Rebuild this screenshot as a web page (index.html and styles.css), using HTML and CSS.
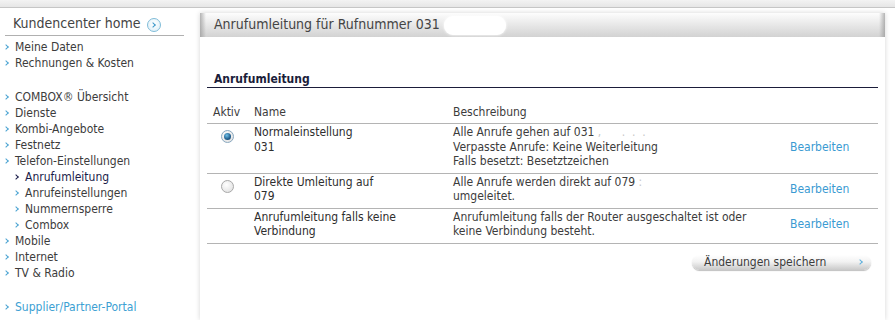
FILE: index.html
```html
<!DOCTYPE html>
<html lang="de">
<head>
  <meta charset="UTF-8">
  <meta name="viewport" content="width=device-width, initial-scale=1.0">
  <title>Anrufumleitung</title>
  <link rel="stylesheet" href="styles.css">
</head>
<body>
  <div class="topbar"></div>

  <div class="page">
    <!-- Navigation -->
    <aside class="sidebar">
      <div class="home">Kundencenter home <span class="home-icon"></span></div>
      <ul class="nav">
        <li><a href="#">Meine Daten</a></li>
        <li><a href="#">Rechnungen &amp; Kosten</a></li>
        <li class="spacer"></li>
        <li><a href="#">COMBOX® Übersicht</a></li>
        <li><a href="#">Dienste</a></li>
        <li><a href="#">Kombi-Angebote</a></li>
        <li><a href="#">Festnetz</a></li>
        <li><a href="#">Telefon-Einstellungen</a></li>
        <li class="sub active"><a href="#">Anrufumleitung</a></li>
        <li class="sub"><a href="#">Anrufeinstellungen</a></li>
        <li class="sub"><a href="#">Nummernsperre</a></li>
        <li class="sub"><a href="#">Combox</a></li>
        <li><a href="#">Mobile</a></li>
        <li><a href="#">Internet</a></li>
        <li><a href="#">TV &amp; Radio</a></li>
        <li class="spacer"></li>
        <li class="portal"><a href="#">Supplier/Partner-Portal</a></li>
      </ul>
    </aside>

    <!-- Content -->
    <main class="panel">
      <div class="panel-head">Anrufumleitung für Rufnummer 031<span class="redacted"></span></div>
      <div class="panel-body">
        <h2 class="section-title">Anrufumleitung</h2>

        <table class="forward-table">
          <colgroup>
            <col class="col-active">
            <col class="col-name">
            <col class="col-desc">
            <col class="col-edit">
          </colgroup>
          <thead>
            <tr>
              <th>Aktiv</th>
              <th>Name</th>
              <th>Beschreibung</th>
              <th></th>
            </tr>
          </thead>
          <tbody>
            <tr>
              <td class="radio-cell"><span class="radio checked"></span></td>
              <td class="name">Normaleinstellung<br>031</td>
              <td class="desc">Alle Anrufe gehen auf 031 <span class="faint">,&nbsp;&nbsp;&nbsp;&nbsp;&nbsp;&nbsp;.&nbsp;&nbsp;.&nbsp;&nbsp;.</span><br>Verpasste Anrufe: Keine Weiterleitung<br>Falls besetzt: Besetztzeichen</td>
              <td class="edit"><a href="#">Bearbeiten</a></td>
            </tr>
            <tr>
              <td class="radio-cell"><span class="radio"></span></td>
              <td class="name">Direkte Umleitung auf<br>079</td>
              <td class="desc">Alle Anrufe werden direkt auf 079 <span class="faint">:</span><br>umgeleitet.</td>
              <td class="edit"><a href="#">Bearbeiten</a></td>
            </tr>
            <tr>
              <td class="radio-cell"></td>
              <td class="name">Anrufumleitung falls keine<br>Verbindung</td>
              <td class="desc">Anrufumleitung falls der Router ausgeschaltet ist oder<br>keine Verbindung besteht.</td>
              <td class="edit"><a href="#">Bearbeiten</a></td>
            </tr>
          </tbody>
        </table>

        <div class="actions">
          <button class="save-btn">Änderungen speichern</button>
        </div>
      </div>
    </main>
  </div>
</body>
</html>
```

FILE: styles.css
```css
body {
  margin: 0;
  font-family: "DejaVu Sans Condensed", "DejaVu Sans", sans-serif;
  font-size: 12px;
  color: #3c3c3c;
  background: #fff;
}
a {
  text-decoration: none;
  color: inherit;
}
.topbar {
  height: 7px;
  background: linear-gradient(#f3f3f3, #e6e6e6);
  border-bottom: 1px solid #c6c6c6;
}
.page {
  display: flex;
  align-items: flex-start;
}

/* sidebar */
.sidebar {
  width: 200px;
  flex: none;
}
.home {
  display: flex;
  align-items: center;
  gap: 6px;
  width: 179px;
  box-sizing: border-box;
  margin-left: 5px;
  padding: 5px 0 2px 8px;
  font-size: 14px;
  line-height: 20px;
  color: #444;
  border-bottom: 1px solid #b0b0b0;
}
.home-icon {
  position: relative;
  width: 12px;
  height: 12px;
  margin-top: 3px;
  border: 1px solid #7fbcd8;
  border-radius: 50%;
  background: radial-gradient(circle at 50% 40%, #ffffff, #d9edf7);
}
.home-icon::after {
  content: "";
  position: absolute;
  left: 3px;
  top: 4px;
  width: 3px;
  height: 3px;
  border-top: 1.5px solid #3a97c9;
  border-right: 1.5px solid #3a97c9;
  transform: rotate(45deg);
}
.nav {
  list-style: none;
  margin: 3px 0 0;
  padding: 0;
}
.nav li {
  position: relative;
  line-height: 16px;
  padding-left: 15px;
}
.nav li::before {
  content: "";
  position: absolute;
  left: 4px;
  top: 6px;
  width: 3px;
  height: 3px;
  border-top: 1.5px solid #4aa3d2;
  border-right: 1.5px solid #4aa3d2;
  transform: rotate(45deg);
}
.nav li.sub {
  padding-left: 25px;
}
.nav li.sub::before {
  left: 14px;
}
.nav li.active a {
  color: #1b1d4a;
}
.nav li.active::before {
  border-color: #1b1d4a;
}
.nav li.spacer {
  height: 18px;
}
.nav li.spacer::before {
  display: none;
}
.nav li.portal a {
  color: #3d9fd3;
}

/* content panel */
.panel {
  width: 685px;
  min-height: 307px;
  margin-top: 5px;
  background: #fff;
  box-shadow: 0 0 5px rgba(0, 0, 0, 0.17);
}
.panel-head {
  height: 24px;
  line-height: 22px;
  padding-left: 14px;
  font-size: 14px;
  color: #444;
  background:
    linear-gradient(to right, rgba(150, 150, 150, 0.7), rgba(150, 150, 150, 0) 6px, rgba(150, 150, 150, 0) calc(100% - 6px), rgba(150, 150, 150, 0.7)),
    linear-gradient(#fdfdfd, #d2d2d2);
}
.redacted {
  display: inline-block;
  width: 62px;
  height: 19px;
  margin-left: 4px;
  vertical-align: middle;
  border-radius: 9px;
  background: #fff;
  box-shadow: 0 0 3px #fff;
}
.panel-body {
  padding: 0 7px;
}
.section-title {
  margin: 34px 0 0;
  padding: 0 0 0 7px;
  font-size: 12px;
  line-height: 16px;
  font-weight: bold;
  color: #1b1d3a;
  border-bottom: 1px solid #1b1d3a;
}

/* table */
.forward-table {
  width: 100%;
  table-layout: fixed;
  border-collapse: collapse;
}
.col-active { width: 41px; }
.col-name { width: 199px; }
.col-desc { width: 337px; }
.forward-table th {
  text-align: left;
  font-weight: normal;
  line-height: 16px;
  padding: 16px 6px 3px;
  border-bottom: 1px solid #b4b4b4;
}
.forward-table td {
  line-height: 14.5px;
  padding: 1px 6px 4px;
  vertical-align: top;
  border-bottom: 1px solid #b4b4b4;
  white-space: nowrap;
}
.forward-table td.name {
  color: #2e2e2e;
}
.forward-table td.edit {
  vertical-align: middle;
}
.edit a {
  color: #3a9ad2;
}
.faint {
  color: #c8c8c8;
}
.radio-cell {
  text-align: center;
}
.radio {
  display: inline-block;
  box-sizing: border-box;
  width: 13px;
  height: 13px;
  margin-top: 5px;
  border: 1px solid #a9a9a9;
  border-radius: 50%;
  background: radial-gradient(circle at 40% 35%, #ffffff, #dcdcdc);
  position: relative;
}
.radio.checked {
  border-color: #8aa9c0;
}
.radio.checked::after {
  content: "";
  position: absolute;
  left: 2px;
  top: 2px;
  width: 7px;
  height: 7px;
  border-radius: 50%;
  background: radial-gradient(circle at 40% 35%, #6fc0e8, #1f5d8c 60%, #123a5c);
}

/* save button */
.actions {
  display: flex;
  justify-content: flex-end;
  margin-top: 11px;
  padding-right: 7px;
}
.save-btn {
  position: relative;
  width: 179px;
  height: 15px;
  padding: 0 0 0 12px;
  text-align: left;
  font-family: inherit;
  font-size: 12px;
  line-height: 14px;
  color: #3c3c3c;
  border: none;
  border-radius: 8px;
  background: linear-gradient(#ffffff, #f2f2f2 45%, #c9c9c9);
  box-shadow: 0 1px 1px rgba(0, 0, 0, 0.25);
  cursor: pointer;
}
.save-btn::after {
  content: "";
  position: absolute;
  right: 9px;
  top: 5px;
  width: 3px;
  height: 3px;
  border-top: 1.5px solid #5fb0dc;
  border-right: 1.5px solid #5fb0dc;
  transform: rotate(45deg);
}
```
